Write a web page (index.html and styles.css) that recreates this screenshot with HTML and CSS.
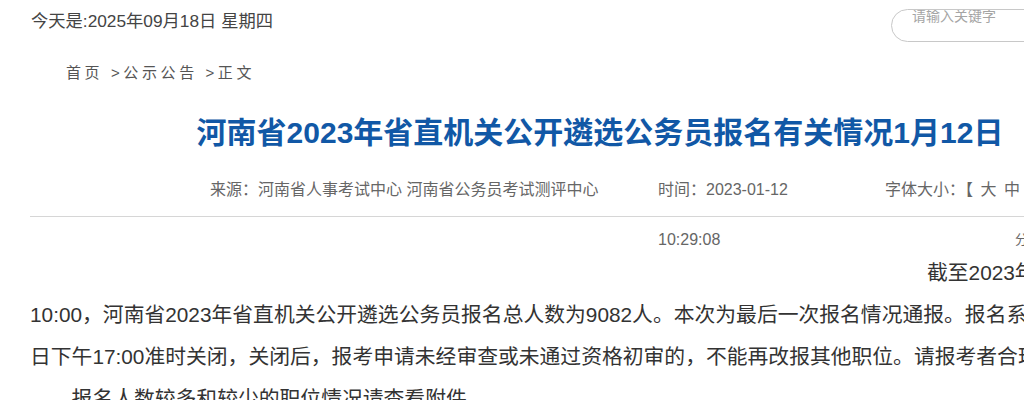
FILE: index.html
```html
<!DOCTYPE html>
<html lang="zh-CN">
<head>
<meta charset="utf-8">
<title>河南省2023年省直机关公开遴选公务员报名有关情况1月12日</title>
<link rel="stylesheet" href="styles.css">
</head>
<body>
<div class="page">
  <header class="top">
    <div class="today">今天是:2025年09月18日 星期四</div>
    <form class="search"><input class="search-input" type="text" placeholder="请输入关键字"></form>
  </header>
  <nav class="crumb">首页 &gt;公示公告 &gt;正文</nav>
  <h1 class="title">河南省2023年省直机关公开遴选公务员报名有关情况1月12日</h1>
  <div class="meta">
    <div class="meta-source">来源：河南省人事考试中心 河南省公务员考试测评中心</div>
    <div class="meta-time">时间：2023-01-12 10:29:08</div>
    <div class="meta-font"><span class="font-size">字体大小：【 大 中 小 】</span><span class="share">分享</span></div>
  </div>
  <article class="content">
    <p class="p-first">截至2023年1月12日10:00，河南省2023年省直机关公开遴选公务员报名总人数为9082人。本次为最后一次报名情况通报。报名系统于1月12日下午17:00准时关闭，关闭后，报考申请未经审查或未通过资格初审的，不能再改报其他职位。请报考者合理安排。</p>
    <p class="p-indent">报名人数较多和较少的职位情况请查看附件。</p>
  </article>
</div>
</body>
</html>
```
FILE: styles.css
```css
html { overflow: hidden; }
body {
  margin: 0;
  background: #fff;
  font-family: "Liberation Sans", "Noto Sans CJK SC", sans-serif;
  color: #333;
}
.page {
  width: 1140px;
  margin-left: 30px;
}
.top {
  display: flex;
  justify-content: space-between;
  align-items: flex-start;
  padding-top: 7px;
}
.today {
  font-size: 17.3px;
  line-height: 28px;
  color: #444;
  margin-left: 1px;
}
.search { margin: 0; }
.search-input {
  box-sizing: border-box;
  width: 279px;
  height: 33px;
  margin: 0;
  padding: 0 0 19px 20px;
  border: 1px solid #c8c8c8;
  border-radius: 17px;
  font-family: "Liberation Sans", "Noto Sans CJK SC", sans-serif;
  font-size: 14px;
  outline: none;
  background: #fff;
}
.search-input::placeholder { color: #a5a5a5; }
.crumb {
  margin-top: 16px;
  padding-left: 36px;
  font-size: 15px;
  line-height: 30px;
  letter-spacing: 3.6px;
  color: #555;
}
.title {
  margin: 20px 0 0;
  font-size: 30px;
  line-height: 50px;
  font-weight: bold;
  color: #1158a6;
  text-align: center;
}
.meta {
  margin-top: 7px;
  height: 51px;
  border-bottom: 1px solid #d6d6d6;
  display: grid;
  grid-template-columns: 448px 227px auto;
  padding-left: 180px;
  font-size: 16px;
  line-height: 50px;
  color: #666;
}
.meta-time { width: 150px; }
.meta-font { white-space: nowrap; }
.font-size { display: block; word-spacing: 3px; }
.share {
  display: block;
  padding-left: 130px;
  font-size: 13px;
}
.content {
  margin-top: 35px;
  width: 1112px;
  font-size: 20.8px;
  line-height: 42px;
  color: #333;
}
.content p { margin: 0; }
.p-first { text-indent: 897px; }
.p-indent { text-indent: 2em; }
```
